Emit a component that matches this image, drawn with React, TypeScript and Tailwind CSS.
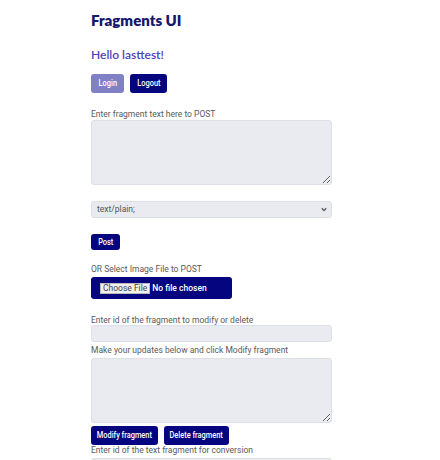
import { useState } from 'react'

const label = 'block text-[8.5px] leading-[10px] text-[#5a5a5a]'
const field = 'block w-full rounded-[3px] border border-[#dde0e6] bg-[#e9ebf0]'
const navyBtn =
  'flex items-center justify-center whitespace-nowrap rounded-[3px] bg-[#05057f] text-[9.5px] font-medium text-white'

function BtnText({ children }: { children: string }) {
  return <span className="inline-block scale-x-[0.78]">{children}</span>
}

export default function App() {
  const [type, setType] = useState('text/plain;')

  return (
    <div className="min-h-[460px] bg-white pl-[91px] font-['Roboto',sans-serif]">
      <div className="w-[241px] pt-[11px]">
        <h1 className="font-['Lato',sans-serif] text-[15px] font-extrabold leading-[18px] text-[#16166b]">
          Fragments UI
        </h1>
        <h2 className="mt-[19px] font-['Lato',sans-serif] text-[12px] font-semibold leading-[14px] text-[#4a44b8]">
          Hello lasttest!
        </h2>

        <div className="mt-[12px] flex gap-[6px]">
          <button className={`h-[19px] w-[33px] ${navyBtn} bg-[#8080c4]`}>
            <BtnText>Login</BtnText>
          </button>
          <button className={`h-[19px] w-[37px] ${navyBtn}`}>
            <BtnText>Logout</BtnText>
          </button>
        </div>

        <label className={`mt-[16px] ${label}`}>Enter fragment text here to POST</label>
        <textarea className={`mt-[1px] h-[65px] resize-y ${field}`} />

        <div className="relative mt-[16px]">
          <select
            value={type}
            onChange={(e) => setType(e.target.value)}
            className={`h-[17px] appearance-none px-[5px] text-[8.5px] text-[#555] ${field}`}
          >
            <option>text/plain;</option>
            <option>text/markdown;</option>
            <option>text/html;</option>
            <option>application/json;</option>
          </select>
          <svg
            className="pointer-events-none absolute right-[5px] top-[6px] h-[5px] w-[6px]"
            viewBox="0 0 6 5"
            fill="none"
            stroke="#555"
            strokeWidth="1.3"
          >
            <path d="M0.8 1.2 3 3.6 5.2 1.2" />
          </svg>
        </div>

        <div className="mt-[16px] flex">
          <button className={`h-[16px] w-[29px] ${navyBtn}`}>
            <BtnText>Post</BtnText>
          </button>
        </div>

        <label className={`mt-[14px] ${label}`}>OR Select Image File to POST</label>
        <div className="mt-[3px] flex h-[22px] w-[141px] items-center gap-[2px] rounded-[3px] bg-[#05057f] pl-[9px]">
          <span className="flex h-[11px] items-center border border-[#bbb] bg-[#efefef] px-[2px] text-[8.5px] text-[#444]">
            Choose File
          </span>
          <span className="text-[8.5px] font-medium text-white">No file chosen</span>
        </div>

        <label className={`mt-[16px] ${label}`}>Enter id of the fragment to modify or delete</label>
        <input className={`h-[17px] ${field}`} />

        <label className={`mt-[3px] ${label}`}>Make your updates below and click Modify fragment</label>
        <textarea className={`mt-[3px] h-[65px] resize-y ${field}`} />

        <div className="mt-[3px] flex gap-[6px]">
          <button className={`h-[19px] w-[67px] ${navyBtn}`}>
            <BtnText>Modify fragment</BtnText>
          </button>
          <button className={`h-[19px] w-[65px] ${navyBtn}`}>
            <BtnText>Delete fragment</BtnText>
          </button>
        </div>

        <label className={label}>Enter id of the text fragment for conversion</label>
        <input className={`mt-[3px] h-[17px] ${field}`} />
      </div>
    </div>
  )
}
